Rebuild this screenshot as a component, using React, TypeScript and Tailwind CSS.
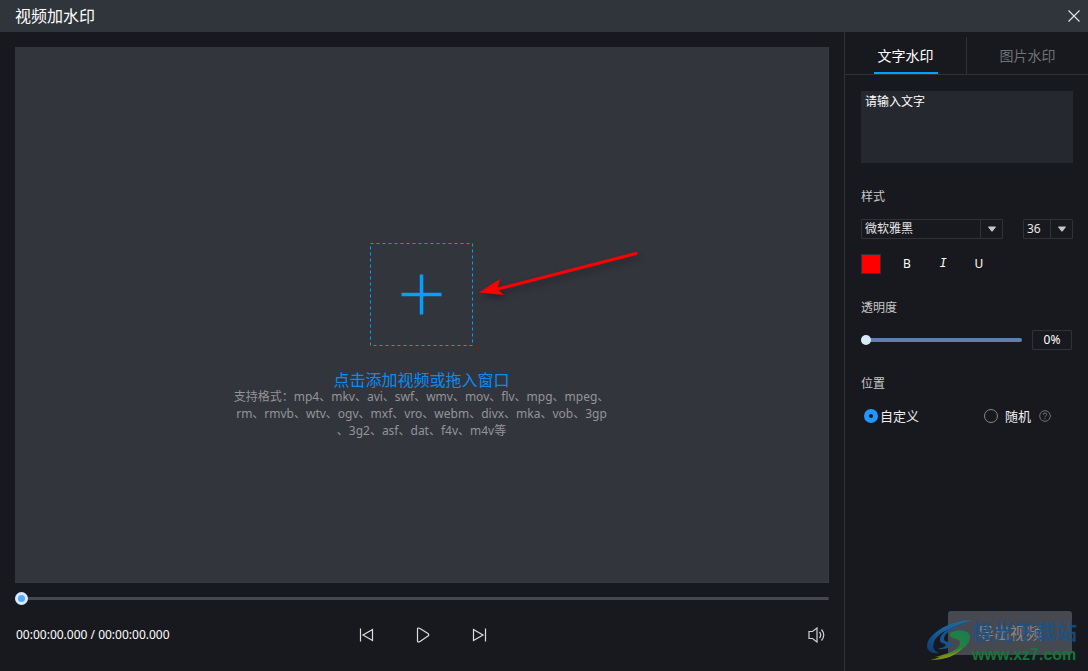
import { useState } from "react";
import type { ReactNode } from "react";

type Tab = "text" | "image";
type Position = "custom" | "random";

const TABS: { value: Tab; label: string }[] = [
  { value: "text", label: "文字水印" },
  { value: "image", label: "图片水印" },
];

const FORMAT_LINES = [
  "支持格式：mp4、mkv、avi、swf、wmv、mov、flv、mpg、mpeg、",
  "rm、rmvb、wtv、ogv、mxf、vro、webm、divx、mka、vob、3gp",
  "、3g2、asf、dat、f4v、m4v等",
];

function Caret() {
  return (
    <span className="pointer-events-none absolute inset-y-0 right-0 grid w-[23px] place-items-center border-l border-[#303238]">
      <svg width="8" height="6" viewBox="0 0 8 6" fill="#c8c8c8">
        <path d="M.4.5h7.2q.4.5 0 1L4.6 5.2Q4 5.8 3.4 5.2L.4 1.5Q0 1 .4.5Z" />
      </svg>
    </span>
  );
}

function Select({ label, options, className }: { label: string; options: string[]; className: string }) {
  return (
    <div className={`relative h-5 ${className}`}>
      <select
        aria-label={label}
        className="block h-full w-full appearance-none rounded-[1px] border border-[#303238] bg-transparent pl-[3px] text-xs leading-[18px] text-[#e6e6e6] outline-none"
      >
        {options.map(o => <option key={o}>{o}</option>)}
      </select>
      <Caret />
    </div>
  );
}

function Section({ title, children }: { title: string; children: ReactNode }) {
  return (
    <section>
      <h3 className="mb-3 text-xs leading-5 text-[#c8c8c8]">{title}</h3>
      {children}
    </section>
  );
}

function Arrow() {
  return (
    <svg
      className="pointer-events-none absolute left-[108px] top-0 overflow-visible drop-shadow-[2px_4px_3px_rgba(0,0,0,0.3)]"
      width="162"
      height="60"
      viewBox="0 0 162 60"
    >
      <path d="M18 46.500 158 10.500" stroke="#f00" strokeWidth="3" strokeLinecap="round" />
      <path d="M1 49.500 22 36 19.500 46 26 52Z" fill="#f00" />
    </svg>
  );
}

function SiteMark() {
  return (
    <div className="pointer-events-none absolute bottom-1 right-[11px] flex items-end">
      <svg className="mb-[6px]" width="45" height="42" viewBox="0 0 45 42">
        <defs>
          <linearGradient id="markBlue" x1="1" y1="0" x2="0" y2="1">
            <stop offset="0" stopColor="#1d6d90" />
            <stop offset=".5" stopColor="#17619a" />
            <stop offset="1" stopColor="#0e3a70" />
          </linearGradient>
          <linearGradient id="markGreen" x1="1" y1="0" x2="0" y2="1">
            <stop offset="0" stopColor="#1d7a5c" />
            <stop offset=".5" stopColor="#1f8438" />
            <stop offset="1" stopColor="#8b9218" />
          </linearGradient>
        </defs>
        <path d="M45 1C36 1 22 4 12 11 4 16 0 22 0 27c0 5 5 8 12 7-5-2-7-5-5-11C10 15 22 8 45 1Z" fill="url(#markBlue)" />
        <path d="M43 3C30 7 18 13 17 19c-1 5 7 3 8 6 0 3-7 6-14 5 3-1 7-2 8-4-1-2-6-1-6-5C13 13 26 6 43 3Z" fill="#17548f" />
        <path d="M25 13c7-3 18-2 18 5 0 6-6 12-13 15-7 4-15 5-22 5 9-2 23-6 25-13 1-5-5-5-9-7-2-2-2-4 1-5Z" fill="url(#markGreen)" />
        <path d="M3 41c6-1 11-4 18-5 5-1 10-3 14-8-4 9-18 13-32 13Z" fill="#7f9118" />
      </svg>
      <div className="flex flex-col">
        <span className="text-[21px] font-bold leading-6 text-[#18528a]/80">极光下载站</span>
        <span className="font-['Liberation_Sans',sans-serif] text-base font-bold leading-6 text-[#16743a]">www.xz7.com</span>
      </div>
    </div>
  );
}

export default function App() {
  const [tab, setTab] = useState<Tab>("text");
  const [text, setText] = useState("请输入文字");
  const [opacity, setOpacity] = useState(0);
  const [position, setPosition] = useState<Position>("custom");

  return (
    <div className="relative flex min-h-screen flex-col bg-[#18191e] font-['Noto_Sans','Noto_Sans_CJK_SC',sans-serif] text-white">
      <header className="flex h-8 shrink-0 items-center justify-between bg-[#30343b] pl-[15px] pr-2">
        <h1 className="text-base leading-6">视频加水印</h1>
        <button aria-label="关闭">
          <svg width="12" height="12" viewBox="0 0 12 12" stroke="#e0e0e0" strokeWidth="1.2">
            <path d="M.5.5l11 11M11.500.5l-11 11" />
          </svg>
        </button>
      </header>

      <div className="flex flex-1">
        <main className="flex min-w-0 flex-1 flex-col px-[15px] pb-[6px] pt-[15px]">
          <div className="flex flex-1 flex-col items-center justify-center border-b border-r border-[#393b40] bg-[#33353c] pt-[53px]">
            <div className="relative">
              <button aria-label="添加视频" className="grid size-[103px] place-items-center">
                <svg width="103" height="103" viewBox="0 0 103 103" fill="none" stroke="#00a0ff">
                  <rect x=".5" y=".5" width="102" height="102" strokeDasharray="3 3" />
                  <path d="M51.500 31.500v40M31.500 51.500h40" strokeWidth="3.500" />
                </svg>
              </button>
              <Arrow />
            </div>
            <p className="mt-[26px] text-base leading-4 text-[#0a8cf5]">点击添加视频或拖入窗口</p>
            <div className="text-center text-xs leading-[17px] text-[#939498]">
              {FORMAT_LINES.map(line => <p key={line}>{line}</p>)}
            </div>
          </div>

          <input
            type="range"
            aria-label="播放进度"
            defaultValue={0}
            className="mt-[9px] block h-[13px] w-full appearance-none bg-transparent outline-none [&::-webkit-slider-runnable-track]:h-[3px] [&::-webkit-slider-runnable-track]:rounded-full [&::-webkit-slider-runnable-track]:bg-[#46484f] [&::-webkit-slider-thumb]:-mt-[5px] [&::-webkit-slider-thumb]:size-[13px] [&::-webkit-slider-thumb]:appearance-none [&::-webkit-slider-thumb]:rounded-full [&::-webkit-slider-thumb]:border-[3px] [&::-webkit-slider-thumb]:border-[#d9eaff] [&::-webkit-slider-thumb]:bg-[#55aaff]"
          />

          <div className="grid h-[60px] grid-cols-[1fr_auto_1fr] items-center pl-px">
            <span className="text-xs">00:00:00.000 / 00:00:00.000</span>
            <div className="flex items-center gap-10">
              <button aria-label="上一个">
                <svg width="16" height="16" viewBox="0 0 16 16" fill="none" stroke="#dedede" strokeWidth="1.200">
                  <path d="M1.500 1.500v13M13.500 2.500v11L4 8z" />
                </svg>
              </button>
              <button aria-label="播放">
                <svg width="16" height="16" viewBox="0 0 16 16" fill="none" stroke="#dedede" strokeWidth="1.200" strokeLinejoin="round">
                  <path d="M2.500 2q0-1 1-1 .8 0 1.500.5l8 5q1.500 1.500 0 2.500L5 14.500q-.7.5-1.500.5-1 0-1-1z" />
                </svg>
              </button>
              <button aria-label="下一个">
                <svg width="16" height="16" viewBox="0 0 16 16" fill="none" stroke="#dedede" strokeWidth="1.200">
                  <path d="M14.500 1.500v13M2.500 2.500v11L12 8z" />
                </svg>
              </button>
            </div>
            <button aria-label="音量" className="mr-1 justify-self-end">
              <svg width="17" height="16" viewBox="0 0 17 16" fill="none" stroke="#d0d0d0" strokeWidth="1.200">
                <path d="M1 4.500h3.500L9 1v14l-4.500-3.500H1z" />
                <path d="M11.500 5q2.500 3 0 6M13.500 2.500q4.500 5.500 0 11" />
              </svg>
            </button>
          </div>
        </main>

        <aside className="flex w-[244px] shrink-0 flex-col border-l border-[#2f3136]">
          <div role="tablist" className="flex h-[43px] items-end border-b border-[#2f3136]">
            {TABS.map(t => (
              <button
                key={t.value}
                role="tab"
                aria-selected={tab === t.value}
                onClick={() => setTab(t.value)}
                className={`flex h-[37px] flex-1 justify-center text-sm first:border-r first:border-[#2f3136] ${
                  tab === t.value ? "text-white" : "text-[#717276]"
                }`}
              >
                <span className={`flex h-full w-16 items-center justify-center border-b-2 pt-[2px] ${
                  tab === t.value ? "border-[#00a0ff]" : "border-transparent"
                }`}>
                  {t.label}
                </span>
              </button>
            ))}
          </div>

          <div className="flex flex-1 flex-col gap-6 pb-4 pl-4 pr-[15px] pt-4">
            <textarea
              aria-label="水印文字"
              value={text}
              onChange={e => setText(e.target.value)}
              className="block h-[72px] w-full shrink-0 resize-none bg-[#25282f] px-1 py-[2px] text-xs leading-[18px] outline-none"
            />

            <Section title="样式">
              <div className="flex justify-between">
                <Select label="字体" options={["微软雅黑", "宋体"]} className="w-[142px]" />
                <Select label="字号" options={["36", "48", "72"]} className="w-[50px]" />
              </div>
              <div className="mt-[15px] flex h-5 gap-4 text-xs leading-5">
                <button aria-label="颜色" className="size-5 border border-[#303238] bg-[#f00]" />
                <button className="w-5">B</button>
                <button className="w-5 font-['Liberation_Mono',monospace] italic">I</button>
                <button className="w-5">U</button>
              </div>
            </Section>

            <Section title="透明度">
              <div className="flex h-5 items-center justify-between pr-px">
                <input
                  type="range"
                  aria-label="透明度"
                  value={opacity}
                  onChange={e => setOpacity(Number(e.target.value))}
                  className="block h-[10px] w-[161px] appearance-none bg-transparent outline-none [&::-webkit-slider-runnable-track]:h-1 [&::-webkit-slider-runnable-track]:rounded-full [&::-webkit-slider-runnable-track]:bg-[#607fae] [&::-webkit-slider-thumb]:-mt-[3px] [&::-webkit-slider-thumb]:size-[10px] [&::-webkit-slider-thumb]:appearance-none [&::-webkit-slider-thumb]:rounded-full [&::-webkit-slider-thumb]:bg-[#d9eaff]"
                />
                <output className="h-5 w-10 rounded-[1px] border border-[#303238] text-center text-xs leading-[18px]">
                  {opacity}%
                </output>
              </div>
            </Section>

            <Section title="位置">
              <div className="flex h-5 items-center pl-[3px] text-[13px] leading-5 text-[#eeeeee]">
                <label className="flex w-[120px] items-center gap-[2px]">
                  <input
                    type="radio"
                    name="position"
                    checked={position === "custom"}
                    onChange={() => setPosition("custom")}
                    className="size-[14px] appearance-none rounded-full border border-[#85868a] checked:border-[5px] checked:border-[#2196ff]"
                  />
                  自定义
                </label>
                <label className="flex items-center gap-[7px]">
                  <input
                    type="radio"
                    name="position"
                    checked={position === "random"}
                    onChange={() => setPosition("random")}
                    className="size-[14px] appearance-none rounded-full border border-[#85868a] checked:border-[5px] checked:border-[#2196ff]"
                  />
                  随机
                </label>
                <svg className="ml-2" width="12" height="12" viewBox="0 0 12 12" fill="none" stroke="#707175">
                  <circle cx="6" cy="6" r="5.300" />
                  <path d="M4.300 4.800q0-1.800 1.700-1.800 1.700 0 1.700 1.500 0 .8-.9 1.300-.8.400-.8 1.400M6 8.200v1.100" />
                </svg>
              </div>
            </Section>

            <div className="mt-auto flex justify-end pr-px">
              <button className="h-11 w-[124px] rounded-[3px] bg-[#474950] text-base text-[#85868a]">
                导出视频
              </button>
            </div>
          </div>
        </aside>
      </div>

      <SiteMark />
    </div>
  );
}
